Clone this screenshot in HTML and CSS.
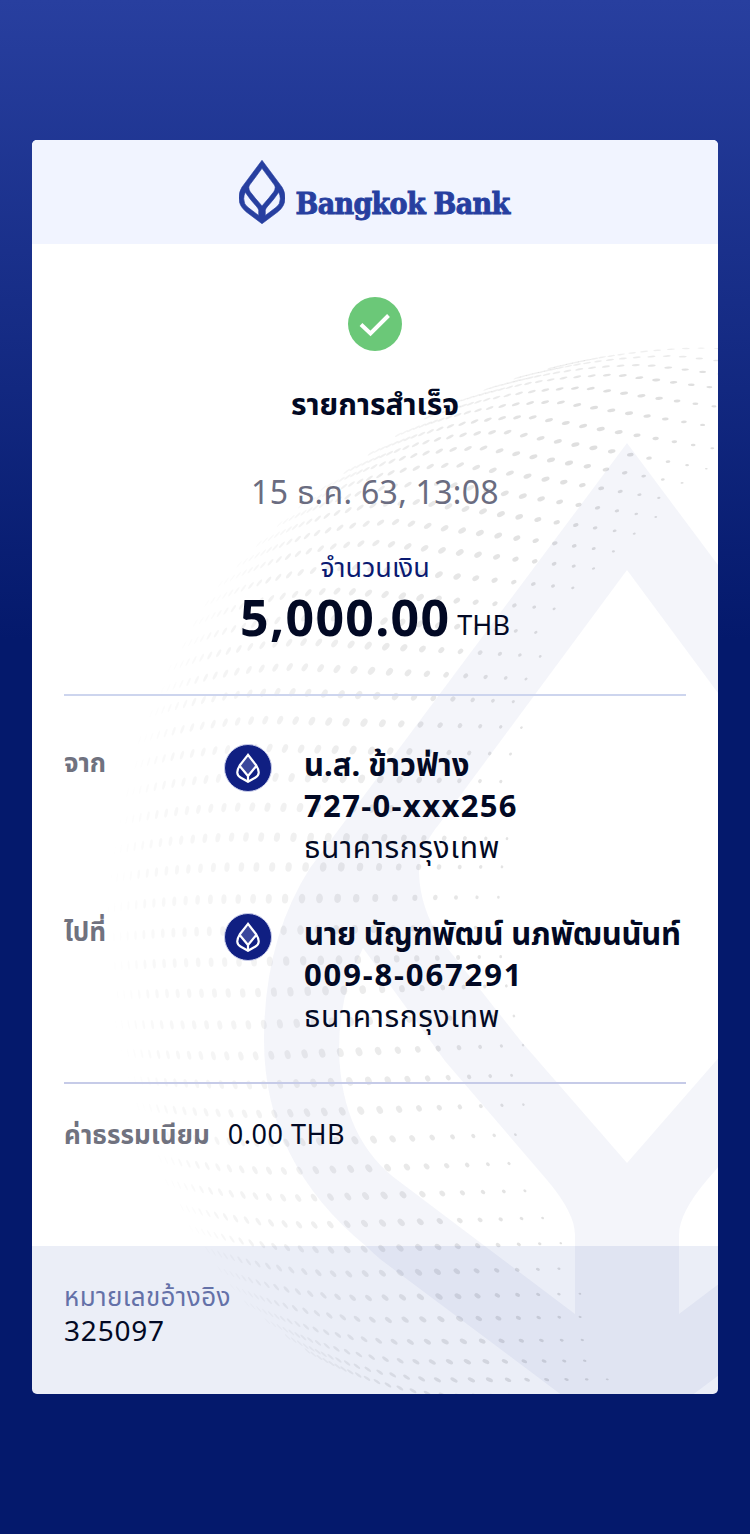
FILE: index.html
```html
<!DOCTYPE html>
<html lang="th">
<head>
    <meta charset="UTF-8">
    <title>Bangkok Bank</title>
    <link rel="stylesheet" href="styles.css">
</head>
<body>
<svg class="defs" width="0" height="0">
    <symbol id="lotus" viewBox="264 443 726 1001">
        <path fill-rule="evenodd" d="M627 443 L310 868 Q264 940 264 1040 Q264 1163 367 1247 Q372 1252 380 1259 L627 1444 L874 1259 Q882 1252 887 1247 Q990 1163 990 1040 Q990 940 944 868 Z
            M627 570 L440 823 Q419 848 419 873 Q420 908 441 940 L520 1040 L627 1163 L734 1040 L813 940 Q834 908 835 873 Q835 848 814 823 Z
            M363 948 Q339 993 339 1050 Q341 1140 400 1182 L575 1314 L575 1235 Q575 1213 547 1180 L445 1061 Z
            M891 948 Q915 993 915 1050 Q913 1140 854 1182 L679 1314 L679 1235 Q679 1213 707 1180 L809 1061 Z"/>
    </symbol>
    <symbol id="badge" viewBox="0 0 24 30">
        <path d="M12 2.5 L20 13.5 Q17.5 19 12 24.5 Q6.5 19 4 13.5 Z" fill="#3c489c"/>
        <path d="M12 1.8 L3.7 12.5 Q-1.5 21 4.5 24.5 L12 28.8 L19.5 24.5 Q25.5 21 20.3 12.5 Z M3.7 13 L12 23 L20.3 13 M12 23 V28" fill="none" stroke="#fff" stroke-width="2.2"/>
    </symbol>
</svg>
<div class="card">
    <svg class="pattern" viewBox="32 140 686 1254">
        <g id="dots"></g>
        <use class="mark" href="#lotus" x="264" y="443" width="726" height="1001"/>
    </svg>
    <div class="head">
        <svg class="logo"><use href="#lotus"/></svg>
        <span class="brand">Bangkok Bank</span>
    </div>
    <div class="body">
        <div class="summary">
            <svg class="check" viewBox="0 0 54 54">
                <circle cx="27" cy="27" r="27"/>
                <path d="M13 27.5 L22.5 36.5 L40.5 18.5"/>
            </svg>
            <h1>รายการสำเร็จ</h1>
            <p class="date">15 ธ.ค. 63, 13:08</p>
            <p class="caption">จำนวนเงิน</p>
            <p class="amount"><b>5,000.00</b><span>THB</span></p>
        </div>
        <div class="parties">
            <div class="row">
                <span class="label">จาก</span>
                <span class="badge"><svg><use href="#badge"/></svg></span>
                <div class="info">
                    <p class="name">น.ส. ข้าวฟ่าง</p>
                    <p class="number">727-0-xxx256</p>
                    <p class="bank">ธนาคารกรุงเทพ</p>
                </div>
            </div>
            <div class="row">
                <span class="label">ไปที่</span>
                <span class="badge"><svg><use href="#badge"/></svg></span>
                <div class="info">
                    <p class="name long">นาย นัญฑพัฒน์ นภพัฒนนันท์</p>
                    <p class="number wide">009-8-067291</p>
                    <p class="bank">ธนาคารกรุงเทพ</p>
                </div>
            </div>
        </div>
        <div class="fee">
            <span class="label">ค่าธรรมเนียม</span>
            <span class="value">0.00 THB</span>
        </div>
    </div>
    <div class="foot">
        <p class="ref">หมายเลขอ้างอิง</p>
        <p class="refno">325097</p>
    </div>
</div>
<script src="globe.js"></script>
</body>
</html>
```
FILE: styles.css
```css
body, h1, p {
    margin: 0;
    padding: 0;
}

body {
    height: 1534px;
    padding-top: 140px;
    box-sizing: border-box;
    background: #04196c linear-gradient(#283f9f 0, #04196c 640px) no-repeat;
    font-family: "Noto Sans", "Noto Sans Thai", sans-serif;
    color: #020924;
}

.defs {
    display: block;
}

.card {
    position: relative;
    box-sizing: border-box;
    width: 686px;
    height: 1254px;
    margin: 0 auto;
    background: #fff;
    border-radius: 5px;
    overflow: hidden;
    display: flex;
    flex-direction: column;
}

/* globe and big lotus behind the content */
.pattern {
    position: absolute;
    top: 0;
    left: 0;
    width: 686px;
    height: 1254px;
}

.mark {
    fill: #28409f;
    fill-opacity: .05;
}

.head, .body, .foot {
    position: relative;
}

.head {
    height: 104px;
    background: #f1f4ff;
    display: flex;
    justify-content: center;
}

.logo {
    width: 46px;
    height: 64px;
    margin: 20px 11px 0 0;
    fill: #273fa0;
    stroke: #273fa0;
    stroke-width: 10px;
}

.brand {
    margin: 46px 2px 0 0;
    font: bold 30px/36px "DejaVu Serif Condensed", "DejaVu Serif", serif;
    letter-spacing: -.7px;
    color: #273fa0;
    -webkit-text-stroke: .9px #273fa0;
}

.body {
    flex: 1;
    padding: 0 32px;
}

.summary {
    height: 450px;
    display: flex;
    flex-direction: column;
    align-items: center;
    border-bottom: 2px solid #cdd5ee;
}

.check {
    width: 54px;
    height: 54px;
    margin-top: 53px;
}

.check circle {
    fill: #6bc878;
}

.check path {
    fill: none;
    stroke: #fff;
    stroke-width: 4;
}

h1 {
    margin-top: 31px;
    font-size: 30px;
    line-height: 44px;
}

.date {
    margin-top: 44px;
    font-size: 32px;
    line-height: 44px;
    letter-spacing: .3px;
    color: #6a6c80;
}

.caption {
    margin-top: 35px;
    font-size: 27px;
    line-height: 36px;
    color: #0a1a72;
}

.amount {
    display: flex;
    align-items: baseline;
    gap: 7px;
    line-height: 64px;
}

.amount b {
    font-size: 50px;
    letter-spacing: 1.3px;
}

.amount span {
    font-size: 27px;
    position: relative;
    top: -1px;
}

.parties {
    height: 388px;
    border-bottom: 2px solid #c6cbe8;
    padding-top: 48px;
    box-sizing: border-box;
    display: flex;
    flex-direction: column;
    gap: 46px;
}

.row {
    display: grid;
    grid-template-columns: 160px 80px 1fr;
    height: 123px;
}

.label {
    font-size: 26px;
    line-height: 36px;
    font-weight: bold;
    color: #70727f;
}

.badge {
    display: flex;
    align-items: center;
    justify-content: center;
    box-sizing: border-box;
    width: 48px;
    height: 48px;
    border: 1px solid #c9cdea;
    border-radius: 50%;
    background: #101f82;
}

.badge svg {
    width: 24px;
    height: 30px;
}

.info p {
    font-size: 31px;
    line-height: 41px;
    white-space: nowrap;
}

.info .name, .info .number {
    font-weight: bold;
}

.info .long {
    letter-spacing: -.25px;
}

.info .number {
    letter-spacing: 1.35px;
}

.info .wide {
    letter-spacing: 1.85px;
}

.info .bank {
    font-size: 30px;
    letter-spacing: .6px;
}

.fee {
    display: flex;
    gap: 18px;
    padding-top: 31px;
    font-size: 27px;
    line-height: 38px;
}

.fee .label {
    line-height: 38px;
    letter-spacing: .1px;
}

.value {
    letter-spacing: .5px;
}

.foot {
    box-sizing: border-box;
    height: 148px;
    padding: 33px 32px 0;
    background: rgba(0, 40, 150, .077);
}

.ref {
    font-size: 26px;
    line-height: 34px;
    letter-spacing: .4px;
    color: #6471a8;
}

.refno {
    font-size: 28px;
    line-height: 34px;
    letter-spacing: .8px;
}
```
FILE: globe.js
```js
var dots = document.getElementById('dots');
var cx = 700, cy = 928, R = 592;

// height of every dot row
var rows = [348, 356, 365, 375, 388, 402, 417, 432, 448, 465, 483, 502, 522, 543, 567, 591, 617, 642, 667, 692, 720, 748, 777, 807, 837, 867,
    899, 931, 962, 993, 1025, 1056, 1085, 1114, 1143, 1171, 1198, 1225, 1250, 1274, 1298, 1320, 1342, 1362, 1380, 1396];
var slope = [[340, .1], [430, .185], [525, .135], [577, .09], [722, .03], [866, 0], [1055, -.04], [1250, -.03], [1400, 0]];
var drop = [[340, 12], [430, 26], [525, 28], [722, 18], [866, 12], [1055, -3], [1250, -18], [1400, -30]];
var edge = [[340, 830], [450, 740], [475, 695], [535, 640], [610, 565], [700, 530], [900, 505], [1060, 525], [1150, 522], [1240, 560], [1400, 620]];

function at(t, v) {
    for (var i = 1; i < t.length; i++) {
        if (v <= t[i][0] || i == t.length - 1) {
            var k = (v - t[i - 1][0]) / (t[i][0] - t[i - 1][0]);
            return t[i - 1][1] + (t[i][1] - t[i - 1][1]) * k;
        }
    }
}

function dot(x, y, size) {
    var dx = x - cx, dy = y - cy;
    var r = Math.sqrt(dx * dx + dy * dy);
    if (r > R) return;
    var flat = Math.max(.16, .92 * Math.sqrt(1 - r * r / R / R));
    var fade = Math.min(1, .25 + (R - r) / 50);
    var e = document.createElementNS('http://www.w3.org/2000/svg', 'ellipse');
    e.setAttribute('rx', (size * flat).toFixed(2));
    e.setAttribute('ry', size.toFixed(2));
    e.setAttribute('transform', 'translate(' + x.toFixed(1) + ' ' + y.toFixed(1) + ') rotate(' + (Math.atan2(dy, dx) * 180 / Math.PI).toFixed(1) + ')');
    e.setAttribute('fill-opacity', (fade * Math.min(.125, .015 + (x - 110) / 4200)).toFixed(3));
    dots.appendChild(e);
}

rows.forEach(function (y0) {
    var t = Math.abs(y0 - cy) / R;
    var left = cx - Math.sqrt(Math.max(0, R * R - (y0 - cy) * (y0 - cy)));
    var peak = left + 130;
    var x = left - 30;
    while (x < 730) {
        var d = Math.max(0, x - left);
        var q = Math.max(0, (peak - x) / 130);
        var y = y0 + at(drop, y0) * q * q + at(slope, y0) * Math.max(0, x - peak);
        var room = at(edge, y) - x;
        if (room > 0) dot(x, y, Math.min(y < cy ? 4.9 - 0.9 * t : 4.9 - 1.2 * t, 1.4 + room / 52));
        x += 6 + (y0 < cy ? 18 - 5 * t : 18 - 3 * t) * (1 - Math.exp(-d / (190 - 110 * t)));
    }
});
```
